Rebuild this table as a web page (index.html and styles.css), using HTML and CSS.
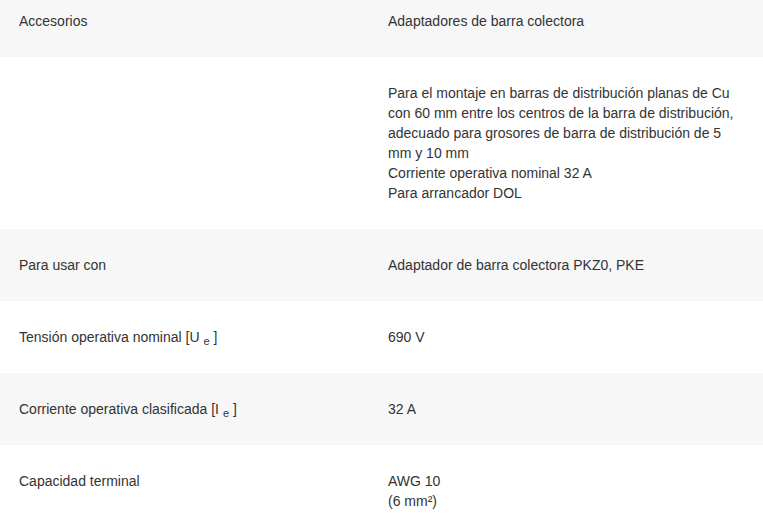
FILE: index.html
```html
<!DOCTYPE html>
<html lang="es">
<head>
<meta charset="utf-8">
<title>Especificaciones</title>
<link rel="stylesheet" href="styles.css">
</head>
<body>
<div class="specs">
  <div class="row alt">
    <div class="label">Accesorios</div>
    <div class="value">Adaptadores de barra colectora</div>
  </div>
  <div class="row">
    <div class="label"></div>
    <div class="value">Para el montaje en barras de distribución planas de Cu con 60 mm entre los centros de la barra de distribución, adecuado para grosores de barra de distribución de 5 mm y 10 mm<br>Corriente operativa nominal 32 A<br>Para arrancador DOL</div>
  </div>
  <div class="row alt">
    <div class="label">Para usar con</div>
    <div class="value">Adaptador de barra colectora PKZ0, PKE</div>
  </div>
  <div class="row">
    <div class="label">Tensión operativa nominal [U <sub>e</sub> ]</div>
    <div class="value">690 V</div>
  </div>
  <div class="row alt">
    <div class="label">Corriente operativa clasificada [I <sub>e</sub> ]</div>
    <div class="value">32 A</div>
  </div>
  <div class="row">
    <div class="label">Capacidad terminal</div>
    <div class="value">AWG 10<br>(6 mm²)</div>
  </div>
</div>
</body>
</html>
```
FILE: styles.css
```css
html, body {
  margin: 0;
  padding: 0;
  background: #ffffff;
}
body {
  font-family: "Liberation Sans", Arial, sans-serif;
  font-size: 14px;
  line-height: 20px;
  color: #333333;
  overflow: hidden;
}
.specs {
  margin-top: -15px;
}
.row {
  display: grid;
  grid-template-columns: 369px 1fr;
  padding: 26px 0;
}
.row.alt {
  background: #f7f7f7;
}
.label, .value {
  padding: 0 19px;
}
sub {
  font-size: 11px;
  line-height: 0;
  vertical-align: -3px;
}
```
